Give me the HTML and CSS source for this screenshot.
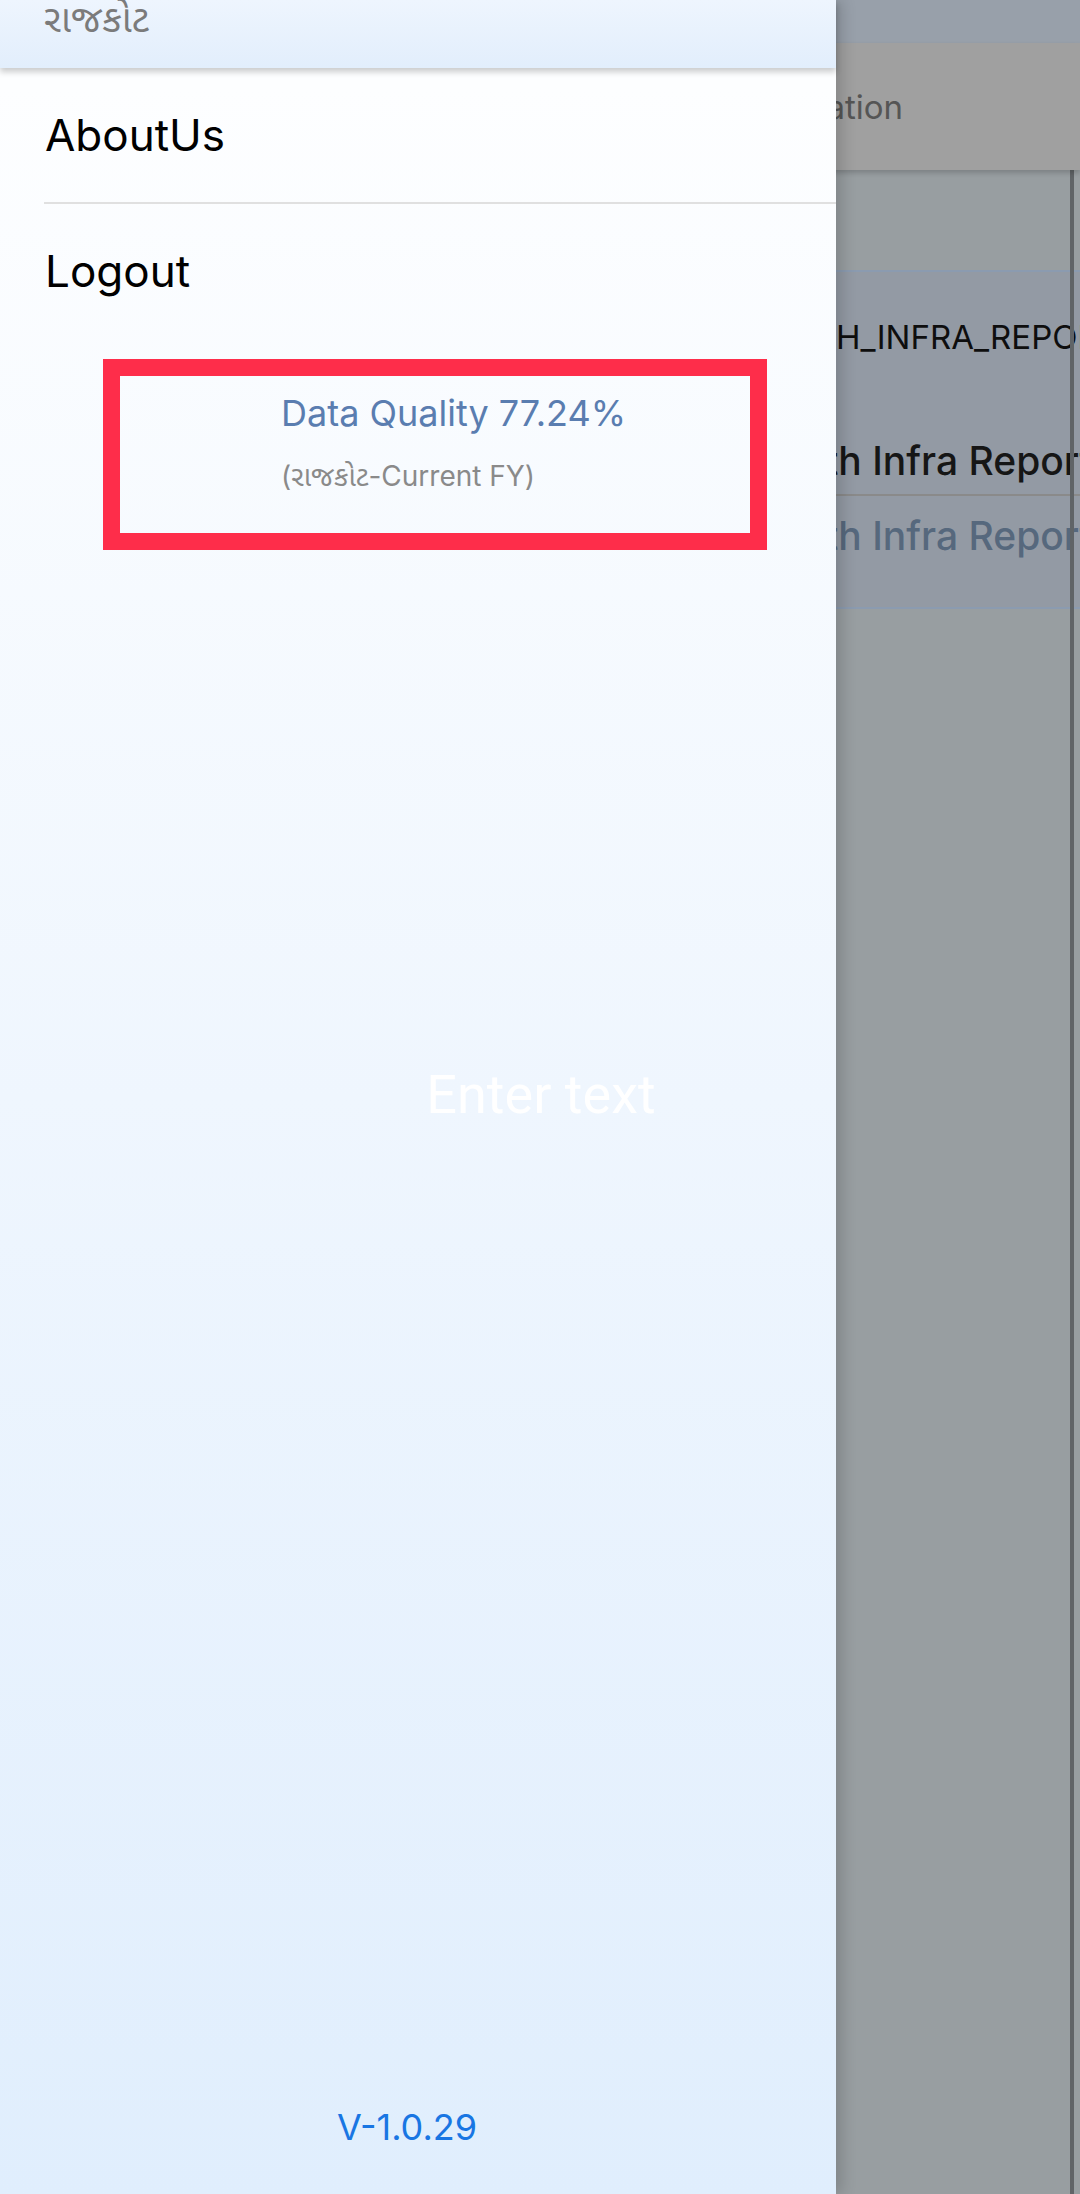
FILE: index.html
```html
<!DOCTYPE html>
<html lang="gu">
<head>
<meta charset="utf-8">
<title>Drawer</title>
<link rel="stylesheet" href="styles.css">
</head>
<body>
<div class="screen">
  <div class="app">
    <div class="app-status"></div>
    <div class="app-toolbar"><span class="app-title">Data Quality Information</span></div>
    <div class="app-content">
      <div class="table">
        <div class="row row-head"><span>H_INFRA_REPORT</span></div>
        <div class="row row-a"><span>th Infra Report</span></div>
        <div class="row row-b"><span>th Infra Report</span></div>
      </div>
      <div class="vline"></div>
    </div>
  </div>

  <aside class="drawer">
    <header class="drawer-header"><span class="gu">રાજકોટ</span></header>
    <nav class="menu">
      <div class="item">AboutUs</div>
      <div class="divider"></div>
      <div class="item">Logout</div>
    </nav>
    <div class="dq">
      <div class="dq-title">Data Quality 77.24%</div>
      <div class="dq-sub">(<span class="gu">રાજકોટ</span>-Current FY)</div>
    </div>
    <div class="version">V-1.0.29</div>
  </aside>

  <div class="highlight"></div>
  <div class="hint">Enter text</div>
</div>
</body>
</html>
```

FILE: styles.css
```css
html, body {
  margin: 0;
  padding: 0;
}
body {
  font-family: Inter, "Noto Sans", sans-serif;
}
.gu {
  font-family: "Noto Sans Gujarati", "Lohit Gujarati", "Noto Serif Gujarati", Shruti, "Noto Sans", sans-serif;
}
.screen {
  position: relative;
  width: 1080px;
  height: 2194px;
  overflow: hidden;
}

/* background app (dimmed) */
.app {
  display: flex;
  flex-direction: column;
  height: 100%;
  background: #989ea1;
}
.app-status {
  height: 43px;
  background: #98a0aa;
  flex-shrink: 0;
}
.app-toolbar {
  height: 127px;
  flex-shrink: 0;
  background: #a0a0a0;
  box-shadow: 0 3px 5px rgba(0, 0, 0, 0.18);
  display: flex;
  align-items: center;
  position: relative;
  z-index: 1;
}
.app-title {
  width: 903px;
  text-align: right;
  white-space: nowrap;
  font-size: 33px;
  color: #555;
}
.app-content {
  flex: 1;
  position: relative;
  padding-top: 100px;
}
.table {
  border-top: 2px solid #8b9bb0;
  border-bottom: 2px solid #8b9bb0;
  background: #939aa4;
}
.row {
  white-space: nowrap;
  line-height: 1;
  box-sizing: border-box;
}
.row-head {
  height: 128px;
  padding: 49px 0 0 836px;
  font-size: 33px;
  color: #0e0e0e;
}
.row-a {
  height: 96px;
  padding: 41px 0 0 825px;
  font-size: 39px;
  font-weight: 500;
  color: #161616;
  border-bottom: 2px solid #8a8a8a;
}
.row-b {
  height: 111px;
  padding: 20px 0 0 825px;
  font-size: 39px;
  font-weight: 500;
  color: #56687d;
}
.vline {
  position: absolute;
  top: 0;
  bottom: 0;
  left: 1070px;
  width: 4px;
  background: #606467;
}

/* drawer */
.drawer {
  position: absolute;
  left: 0;
  top: 0;
  width: 836px;
  height: 100%;
  display: flex;
  flex-direction: column;
  background: linear-gradient(#fdfeff 4%, #eff6fe 50%, #e0eefd 100%);
  box-shadow: 6px 0 14px rgba(0, 0, 0, 0.16);
  z-index: 2;
}
.drawer-header {
  height: 68px;
  flex-shrink: 0;
  box-sizing: border-box;
  padding-left: 44px;
  background: linear-gradient(#eef5fe, #e2eefc);
  box-shadow: 0 4px 6px rgba(0, 0, 0, 0.2);
  position: relative;
  z-index: 1;
  font-size: 38px;
  line-height: 36px;
  color: #7b7b7b;
}
.menu {
  display: flex;
  flex-direction: column;
}
.item {
  height: 134px;
  display: flex;
  align-items: center;
  padding-left: 45px;
  font-size: 44px;
  color: #000;
}
.divider {
  height: 2px;
  margin-left: 44px;
  background: #e0e0e0;
}
.dq {
  margin-top: 57px;
  padding-left: 281px;
  line-height: 1;
}
.dq-title {
  font-size: 36px;
  color: #5a7db0;
}
.dq-sub {
  margin-top: 31px;
  font-size: 28px;
  color: #8a8a8a;
}
.version {
  margin-top: auto;
  margin-bottom: 49px;
  padding-right: 22px;
  text-align: center;
  font-size: 36px;
  line-height: 1;
  color: #1976e3;
}

/* overlays */
.highlight {
  position: absolute;
  left: 103px;
  top: 359px;
  width: 664px;
  height: 191px;
  box-sizing: border-box;
  border: 17px solid #fe2d4a;
  z-index: 3;
}
.hint {
  position: absolute;
  left: 0;
  right: 0;
  top: 1068px;
  padding-left: 2px;
  text-align: center;
  font-family: Roboto, sans-serif;
  font-size: 54px;
  line-height: 1;
  color: rgba(255, 255, 255, 0.96);
  z-index: 3;
}
```
